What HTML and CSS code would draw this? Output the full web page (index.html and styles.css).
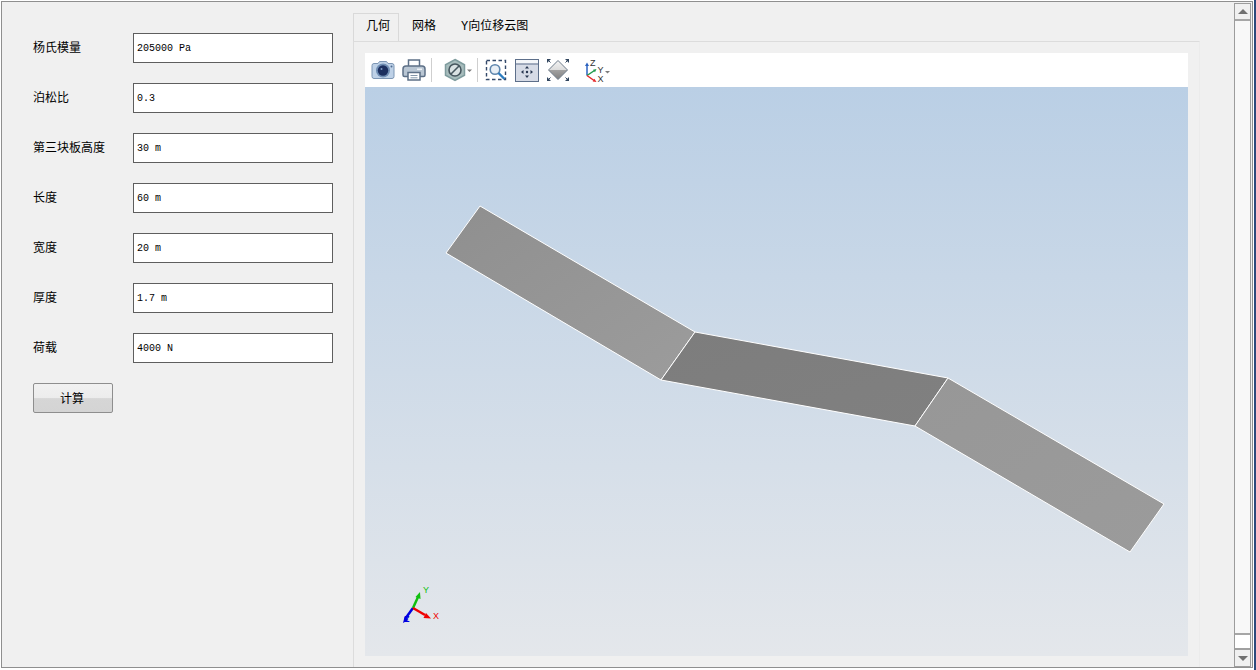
FILE: index.html
```html
<!DOCTYPE html>
<html lang="zh-CN">
<head>
<meta charset="utf-8">
<title>几何</title>
<link rel="stylesheet" href="styles.css">
</head>
<body>
<div class="window">
  <aside class="form">
    <div class="row"><label class="label">杨氏模量</label><input class="field" value="205000 Pa" readonly></div>
    <div class="row"><label class="label">泊松比</label><input class="field" value="0.3" readonly></div>
    <div class="row"><label class="label">第三块板高度</label><input class="field" value="30 m" readonly></div>
    <div class="row"><label class="label">长度</label><input class="field" value="60 m" readonly></div>
    <div class="row"><label class="label">宽度</label><input class="field" value="20 m" readonly></div>
    <div class="row"><label class="label">厚度</label><input class="field" value="1.7 m" readonly></div>
    <div class="row"><label class="label">荷载</label><input class="field" value="4000 N" readonly></div>
    <button class="calc">计算</button>
  </aside>
  <main class="main">
    <nav class="tabs">
      <div class="tab tab-active">几何</div>
      <div class="tab">网格</div>
      <div class="tab">Y向位移云图</div>
    </nav>
    <section class="panel">
      <div class="toolbar">
        <svg class="ico m-camera" viewBox="0 0 24 24">
          <path d="M1 7.500q0-2 2-2h4l1.500-2h7l1.500 2h4q2 0 2 2v11q0 2-2 2H3q-2 0-2-2z" fill="#bed1e7" stroke="#7d96b4"/>
          <circle cx="12" cy="12.500" r="7" fill="#6f8db3"/>
          <circle cx="12" cy="12.500" r="5.200" fill="#1c2f5f"/>
          <circle cx="10.500" cy="11" r="1" fill="#7f9cc4"/>
          <circle cx="20.500" cy="8.500" r="1" fill="#4f6c92"/>
        </svg>
        <svg class="ico m-next" viewBox="0 0 24 24">
          <path d="M6.500 9V2h11v7" fill="#fff" stroke="#5d7087" stroke-width="1.500"/>
          <path d="M1 11q0-3 3-3h16q3 0 3 3v6q0 1.500-1.500 1.500h-19Q1 18.500 1 17z" fill="#b9c6d3" stroke="#5d7087" stroke-width="1.500"/>
          <rect x="15" y="10.500" width="5" height="1.500" fill="#eef2f6"/>
          <rect x="6" y="14.500" width="12" height="7.500" fill="#fff" stroke="#5d7087" stroke-width="1.500"/>
          <path d="M8.500 17.500h7M8.500 19.800h7" stroke="#8497aa"/>
        </svg>
        <span class="sep m-sep1"></span>
        <svg class="ico-wide m-hex" viewBox="0 0 30 24">
          <path d="M12 1.500l9.500 5.300v10.400L12 22.500 2.500 17.200V6.800z" fill="#a8bdbd" stroke="#7f9c9e" stroke-width="1.500"/>
          <circle cx="12" cy="12" r="6" fill="#d9e2e3" stroke="#46565e" stroke-width="1.600"/>
          <path d="M8 16l8-8" stroke="#46565e" stroke-width="1.600"/>
          <path d="M24 11.500h5L26.500 14z" fill="#7c7c7c"/>
        </svg>
        <span class="sep m-sep2"></span>
        <svg class="ico m-next-small" viewBox="0 0 24 24">
          <rect x="2.500" y="2.500" width="19" height="19" fill="none" stroke="#33496a" stroke-width="1.400" stroke-dasharray="3.500 2.500"/>
          <circle cx="11" cy="11.500" r="4.800" fill="#e8eff6" stroke="#5f86ad" stroke-width="1.600"/>
          <path d="M14.500 15l6 6" stroke="#2b7cc0" stroke-width="2.400"/>
        </svg>
        <svg class="ico m-next" viewBox="0 0 24 24">
          <rect x=".5" y="1.500" width="23" height="22" fill="#d6dbe6" stroke="#5d6f8a"/>
          <rect x="1" y="2" width="22" height="3.500" fill="#f4f6f9"/>
          <path d="M1 6h22" stroke="#5d6f8a"/>
          <path d="M12 8l2 2.500h-4zM12 20l2-2.500h-4zM6 14l2.500-2v4zM18 14l-2.500-2v4z" fill="#26364f"/>
          <circle cx="12" cy="14" r="1.200" fill="#26364f"/>
        </svg>
        <svg class="ico m-next" viewBox="0 0 24 24">
          <defs>
            <linearGradient id="fitFace" x1="0" y1="0" x2="0" y2="1">
              <stop offset="0" stop-color="#f4f4f4"/><stop offset=".5" stop-color="#dcdcdc"/>
              <stop offset=".5" stop-color="#a2a2a2"/><stop offset="1" stop-color="#808080"/>
            </linearGradient>
          </defs>
          <path d="M12 2.500L21.500 12 12 21.500 2.500 12z" fill="url(#fitFace)" stroke="#6d7b8a"/>
          <path d="M1 1h4L1 5zM23 1h-4l4 4zM1 23h4l-4-4zM23 23h-4l4-4z" fill="#32465f"/>
          <path d="M2 2l2.500 2.500M22 2l-2.500 2.500M2 22l2.500-2.500M22 22l-2.500-2.500" stroke="#32465f"/>
        </svg>
        <svg class="ico-axes m-axes" viewBox="0 0 29 24">
          <path d="M4 17.500V7" stroke="#2b62c0" stroke-width="1.500"/>
          <path d="M4 4.500L6 8H2z" fill="#2b62c0"/>
          <path d="M4 17.500l7.500-5" stroke="#1f9a4a" stroke-width="1.500"/>
          <path d="M13.500 11L12 14.200l-2-2.500z" fill="#1f9a4a"/>
          <path d="M4 17.500l7 5" stroke="#e5272a" stroke-width="1.500"/>
          <path d="M13.500 24l-3.800-.5 1.700-2.800z" fill="#e5272a"/>
          <text class="axis-mini" x="7" y="8">Z</text>
          <text class="axis-mini" x="14.500" y="15">Y</text>
          <text class="axis-mini" x="14.500" y="23.500">X</text>
          <path d="M22 13h5l-2.500 2.500z" fill="#7c7c7c"/>
        </svg>
      </div>
      <div class="viewport">
        <svg class="scene" viewBox="365 87 823 569">
          <defs>
            <linearGradient id="plateA" x1="0" y1="0" x2="1" y2="1">
              <stop offset="0" stop-color="#8f8f8f"/><stop offset="1" stop-color="#9c9c9c"/>
            </linearGradient>
            <linearGradient id="plateB" x1="0" y1="0" x2="1" y2="1">
              <stop offset="0" stop-color="#7d7d7d"/><stop offset="1" stop-color="#808080"/>
            </linearGradient>
            <linearGradient id="plateC" x1="0" y1="0" x2="1" y2="1">
              <stop offset="0" stop-color="#979797"/><stop offset="1" stop-color="#9b9b9b"/>
            </linearGradient>
          </defs>
          <polygon class="plate" points="480,206 695,332 661,380 446,253" fill="url(#plateA)"/>
          <polygon class="plate" points="695,332 948,378 915,426 661,380" fill="url(#plateB)"/>
          <polygon class="plate" points="948,378 1164,504 1130,552 915,426" fill="url(#plateC)"/>
          <path d="M413 608l-8 11" stroke="#0000e0" stroke-width="2.500"/>
          <path d="M403 623l1.500-6 4 3z" fill="#0000e0"/>
          <path d="M413 608l5-11" stroke="#10c010" stroke-width="2.500"/>
          <path d="M420 592l.5 7-5-2z" fill="#10c010"/>
          <path d="M413 608l12 7" stroke="#f00000" stroke-width="2.500"/>
          <path d="M431 618.500l-7.500-.5 2.500-5z" fill="#f00000"/>
          <text class="axis-label axis-y" x="423" y="593">Y</text>
          <text class="axis-label axis-x" x="433" y="619">X</text>
          <text class="axis-label axis-z" x="404" y="622">Z</text>
        </svg>
      </div>
    </section>
  </main>
  <div class="scrollbar">
    <div class="sb-btn"><span class="arrow-up"></span></div>
    <div class="sb-track"></div>
    <div class="sb-page"></div>
    <div class="sb-btn sb-btn-down"><span class="arrow-down"></span></div>
  </div>
</div>
<div class="edge"></div>
</body>
</html>
```
FILE: styles.css
```css
* { box-sizing: border-box; }
html, body { height: 100%; }
body {
  margin: 0;
  display: flex;
  background: #fff;
  overflow: hidden;
  font-family: "Noto Sans CJK SC", "Liberation Sans", sans-serif;
  font-size: 12px;
  color: #000;
}
.window {
  width: 1252px;
  height: 667px;
  margin: 1px 0 0 1px;
  border: 1px solid #8f8f8f;
  background: #f0f0f0;
  display: flex;
}
.edge {
  width: 2px;
  height: 670px;
  margin-left: 1px;
  background: #2c4a7c;
}
.form {
  width: 351px;
  flex: none;
  padding: 31px 0 0 31px;
  display: flex;
  flex-direction: column;
  gap: 20px;
}
.row { display: flex; align-items: center; height: 30px; }
.label { width: 100px; line-height: 28px; padding-bottom: 2px; }
.field {
  width: 200px;
  height: 30px;
  padding: 0 3px;
  border: 1px solid #5e5e5e;
  border-radius: 0;
  outline: none;
  background: #fff;
  font-family: "Liberation Mono", monospace;
  font-size: 10px;
  color: #000;
}
.calc {
  width: 80px;
  height: 30px;
  padding: 0 2px 2px 0;
  border: 1px solid #8e8e8e;
  border-radius: 2px;
  background: linear-gradient(#f1f1f1 0, #ececec 50%, #d6d6d6 52%, #d4d4d4 100%);
  font-family: inherit;
  font-size: 12px;
  color: #000;
}
.main {
  width: 847px;
  flex: none;
  margin-top: 11px;
  display: flex;
  flex-direction: column;
}
.tabs { display: flex; height: 28px; }
.tab {
  padding: 0 12px 0 13px;
  line-height: 28px;
  font-family: "Liberation Mono", "Noto Sans CJK SC", monospace;
}
.tab-active {
  padding: 0 8px 0 12px;
  border: 1px solid #d9d9d9;
  border-bottom: 0;
  line-height: 27px;
}
.panel {
  flex: 1;
  display: flex;
  flex-direction: column;
  padding: 11px 11px 11px;
  border: 1px solid #dcdcdc;
  border-right-color: #ebebeb;
  border-bottom: 0;
}
.toolbar {
  height: 34px;
  flex: none;
  display: flex;
  align-items: center;
  background: #fff;
}
.ico { width: 24px; height: 24px; flex: none; }
.ico-wide { width: 30px; height: 24px; flex: none; }
.ico-axes { width: 29px; height: 24px; flex: none; }
.m-camera { margin-left: 6px; }
.m-next { margin-left: 7px; }
.m-next-small { margin-left: 6px; }
.m-hex { margin-left: 11px; }
.m-axes { margin-left: 13px; }
.sep { width: 1px; height: 24px; flex: none; background: #cfcfcf; }
.m-sep1 { margin-left: 5px; }
.m-sep2 { margin-left: 4px; }
.axis-mini {
  font-family: "Liberation Sans", sans-serif;
  font-size: 9px;
  fill: #333;
}
.viewport {
  flex: 1;
  background: linear-gradient(#bacfe5, #e4e7eb);
}
.scene { display: block; width: 823px; height: 569px; }
.plate { stroke: #fff; stroke-width: 1; }
.axis-label { font-family: "Liberation Sans", sans-serif; font-size: 9px; }
.axis-y { fill: #10c010; }
.axis-x { fill: #f00000; }
.axis-z { fill: #0000e0; font-weight: 700; }
.scrollbar {
  width: 17px;
  flex: none;
  margin: 1px 1px 0 auto;
  border: 1px solid #9c9c9c;
  display: flex;
  flex-direction: column;
}
.sb-btn {
  height: 15px;
  flex: none;
  display: flex;
  align-items: center;
  justify-content: center;
  background: #f0f0f0;
}
.sb-btn-down { height: 18px; border-top: 2px solid #a0a0a0; }
.sb-track {
  flex: 1;
  background: #f8f8f8;
  border-top: 2px solid #a6a6a6;
  border-bottom: 2px solid #a6a6a6;
}
.sb-page { height: 13px; flex: none; background: #fff; }
.arrow-up {
  width: 0;
  height: 0;
  border: 5px solid transparent;
  border-top: 0;
  border-bottom: 5px solid #707070;
}
.arrow-down {
  width: 0;
  height: 0;
  border: 5px solid transparent;
  border-bottom: 0;
  border-top: 5px solid #707070;
}
```
